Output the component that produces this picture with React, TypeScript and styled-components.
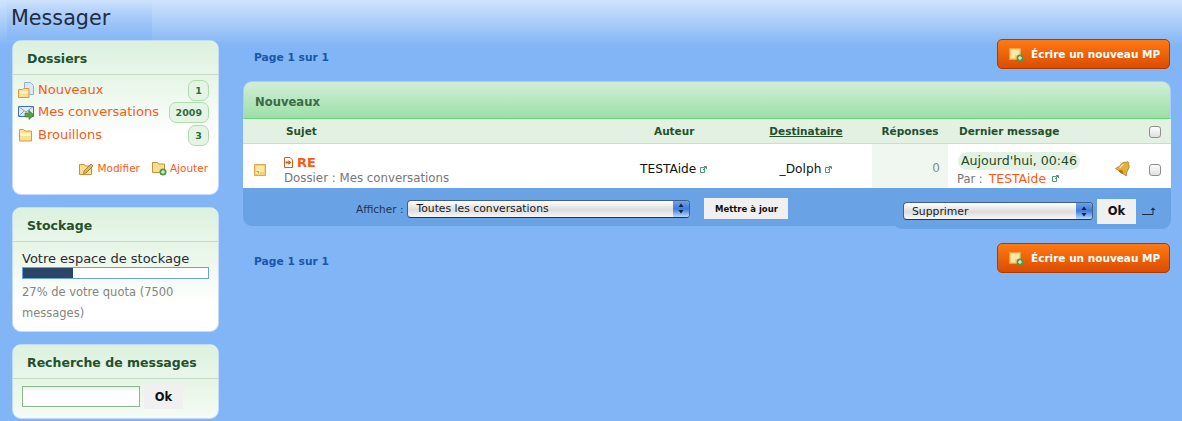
import { ReactElement } from 'react';
import styled, { createGlobalStyle } from 'styled-components';

const GlobalStyle = createGlobalStyle`
  html, body {
    margin: 0;
    padding: 0;
    height: 100%;
  }

  body {
    background: #82b5f5;
    font-family: "DejaVu Sans", Verdana, sans-serif;
  }
`;

const Page = styled.div`
  height: 421px;
  overflow: hidden;
  box-sizing: border-box;
  background: linear-gradient(#d0e3fd 0, #82b5f5 46px);
`;

const Title = styled.h1`
  width: 145px;
  height: 40px;
  box-sizing: border-box;
  margin: 0 0 0 7px;
  padding: 4px 0 0 4px;
  font-size: 20.700px;
  line-height: 28px;
  font-weight: 400;
  color: #1d2c45;
  background: linear-gradient(rgba(130, 181, 245, 0) 0, rgba(130, 181, 245, 0.55) 100%);
`;

const Columns = styled.div`
  display: flex;
  align-items: flex-start;
  padding: 0 11px 0 12px;
  gap: 24px;
`;

const Sidebar = styled.aside`
  display: flex;
  flex-direction: column;
  gap: 12px;
  width: 207px;
  flex-shrink: 0;
`;

const Panel = styled.section<{ $height: number }>`
  height: ${(p) => p.$height}px;
  box-sizing: border-box;
  border-radius: 9px;
  overflow: hidden;
  border: 1px solid #c4dcf8;
  background: linear-gradient(#ffffff 0, #e6f5e6 36px, #ffffff 96px);
`;

const PanelTitle = styled.h2`
  height: 34px;
  box-sizing: border-box;
  margin: 0;
  padding-left: 14px;
  font-size: 12.500px;
  line-height: 35px;
  font-weight: 700;
  color: #24502c;
  background: linear-gradient(#dcf1de, #e8f6ea);
  border-bottom: 1px solid #c5dcc8;
`;

const FolderList = styled.ul`
  list-style: none;
  margin: 4px 0 0;
  padding: 0 9px 0 5px;
`;

const FolderRow = styled.li`
  display: flex;
  align-items: center;
  height: 22.500px;
`;

const FolderIcon = styled.span`
  display: flex;
  justify-content: flex-start;
  width: 20px;
  flex-shrink: 0;
`;

const FolderLink = styled.a`
  flex: 1;
  margin-top: -2px;
  font-size: 13px;
  color: #fb5a14;
`;

const Count = styled.span`
  min-width: 21px;
  height: 21px;
  box-sizing: border-box;
  padding: 0 6px;
  border: 1px solid #aedcae;
  border-radius: 7px;
  background: #e6f4e6;
  color: #2f6b3b;
  font-size: 9.500px;
  font-weight: 700;
  line-height: 20px;
  text-align: center;
`;

const FolderActions = styled.div`
  display: flex;
  justify-content: flex-end;
  gap: 12px;
  margin-top: 14px;
  padding-right: 10px;
`;

const FolderAction = styled.a`
  display: flex;
  align-items: center;
  gap: 3px;
  font-size: 10.500px;
  color: #fb5a14;
`;

const PanelBody = styled.div`
  padding: 8px 9px 0;
`;

const StorageLabel = styled.div`
  font-size: 13px;
  line-height: 17px;
  color: #2a2a33;
`;

const Meter = styled.div`
  height: 12px;
  box-sizing: border-box;
  border: 1px solid #6a9fe3;
  background: #fff;
`;

const MeterFill = styled.div`
  height: 100%;
  background: #2a4568;
`;

const Quota = styled.p`
  margin: 3px 0 0;
  font-size: 11.500px;
  line-height: 21px;
  color: #85857f;
`;

const SearchRow = styled.div`
  display: flex;
  align-items: center;
  gap: 4px;
  padding: 5px 0 0 9px;
`;

const SearchInput = styled.input`
  width: 118px;
  height: 21px;
  box-sizing: border-box;
  border: 1px solid #8cb98c;
  background: linear-gradient(#ececec, #ffffff 5px);
  padding: 0;
`;

const FlatButton = styled.button<{ $width: number; $height: number; $size: number; $left?: number }>`
  width: ${(p) => p.$width}px;
  height: ${(p) => p.$height}px;
  margin-left: ${(p) => p.$left ?? 0}px;
  border: 0;
  padding: 0;
  background: #f0f0f0;
  color: #111;
  font-family: inherit;
  font-size: ${(p) => p.$size}px;
  font-weight: 700;
`;

const Main = styled.main`
  flex: 1;
  min-width: 0;
`;

const PageBar = styled.div<{ $gap: number }>`
  display: flex;
  align-items: center;
  justify-content: space-between;
  height: 30px;
  margin-top: ${(p) => p.$gap}px;
  padding: 0 1px 0 11px;
`;

const PageInfo = styled.span`
  padding-top: 6px;
  font-size: 10.700px;
  font-weight: 700;
  color: #1a56a8;
`;

const WriteButton = styled.a`
  display: flex;
  align-items: center;
  gap: 7px;
  width: 173px;
  height: 30px;
  box-sizing: border-box;
  padding-left: 11px;
  border: 1px solid #a83c05;
  border-radius: 5px;
  background: linear-gradient(#ff7a12, #dc4c02);
  color: #fff;
  font-size: 10.500px;
  font-weight: 700;
`;

const Board = styled.section`
  margin-top: 12px;
`;

const BoardTitle = styled.h2`
  height: 38px;
  box-sizing: border-box;
  margin: 0;
  padding-left: 11px;
  border: 1px solid #a9cdf3;
  border-bottom: 1px solid #62d67c;
  border-radius: 9px 9px 0 0;
  background: linear-gradient(#d3eed7, #9cdfa8);
  color: #3c6a42;
  font-size: 11.600px;
  line-height: 41px;
  font-weight: 700;
`;

const grid = '40px 356px 101px 132px 76px 157px 37px 29px';

const HeadRow = styled.div`
  display: grid;
  grid-template-columns: ${grid};
  align-items: center;
  height: 25px;
  box-sizing: border-box;
  background: #e3f1e3;
  border-bottom: 1px solid #d3d8d3;
  color: #24502c;
  font-size: 10.500px;
  font-weight: 700;
`;

const HeadCell = styled.span<{ $align?: string; $pad?: string; $underline?: boolean }>`
  text-align: ${(p) => p.$align ?? 'left'};
  padding: ${(p) => p.$pad ?? '0'};
  text-decoration: ${(p) => (p.$underline ? 'underline' : 'none')};
`;

const DataRow = styled.div`
  display: grid;
  grid-template-columns: ${grid};
  grid-template-rows: 44px;
  height: 44px;
  align-items: stretch;
  background: #fff;
`;

const Cell = styled.div<{ $justify?: string; $tint?: boolean; $top?: number; $left?: number }>`
  display: flex;
  align-items: center;
  justify-content: ${(p) => p.$justify ?? 'flex-start'};
  box-sizing: border-box;
  padding-top: ${(p) => p.$top ?? 0}px;
  padding-left: ${(p) => p.$left ?? 0}px;
  background: ${(p) => (p.$tint ? '#f0f7f0' : 'transparent')};
`;

const SubjectCell = styled.div`
  padding: 10px 0 0 1px;
`;

const SubjectLine = styled.div`
  display: flex;
  align-items: center;
  gap: 4px;
  height: 17px;
  color: #fb5a14;
  font-size: 13px;
  font-weight: 700;
`;

const SubjectFolder = styled.div`
  font-size: 11.800px;
  line-height: 15px;
  color: #767676;
  white-space: nowrap;
`;

const UserName = styled.span`
  display: inline-flex;
  align-items: center;
  gap: 4px;
  font-size: 12.200px;
  color: #111;
`;

const Replies = styled.span`
  width: 100%;
  padding-right: 8px;
  text-align: right;
  font-size: 12px;
  color: #8a8a8a;
`;

const LastCell = styled.div`
  padding: 8px 0 0 9px;
`;

const DatePill = styled.span`
  display: block;
  width: fit-content;
  height: 18px;
  margin-left: 1px;
  padding: 0 3px;
  border-radius: 9px;
  background: #e3f1e3;
  color: #1f4a27;
  font-size: 12.600px;
  line-height: 18px;
  white-space: nowrap;
`;

const ByLine = styled.div`
  display: flex;
  align-items: center;
  gap: 6px;
  height: 17px;
  font-size: 11.500px;
  color: #767676;
`;

const ByName = styled.span`
  font-size: 12.400px;
  color: #fb5a14;
`;

const Check = styled.span`
  display: block;
  width: 10px;
  height: 10px;
  margin-right: 3px;
  border: 1px solid #8f8f8f;
  border-radius: 3px;
  background: linear-gradient(#fdfdfd, #dfdfdf);
`;

const Footer = styled.div`
  display: flex;
  justify-content: space-between;
  align-items: flex-start;
  height: 38px;
  margin-bottom: 3px;
  border-radius: 0 0 9px 9px;
  background: #6aa2e6;
`;

const FilterForm = styled.div`
  display: flex;
  align-items: center;
  gap: 4px;
  padding: 10px 0 0 113px;
  font-size: 10.500px;
  color: #24344e;
`;

const ActionForm = styled.div`
  display: flex;
  align-items: center;
  width: 278px;
  height: 41px;
  box-sizing: border-box;
  padding: 5px 0 0 10px;
  border-radius: 0 9px 9px 9px;
  background: #6aa2e6;
`;

const FakeSelect = styled.div<{ $width: number }>`
  display: flex;
  align-items: center;
  justify-content: space-between;
  width: ${(p) => p.$width}px;
  height: 18px;
  box-sizing: border-box;
  padding-left: 8px;
  border: 1px solid #3f5f8c;
  border-bottom-color: #24344e;
  border-radius: 4px;
  background: linear-gradient(#ffffff, #dcdcdc 55%, #f7f7f7);
  color: #1a1a1a;
  font-size: 10.800px;
  overflow: hidden;
`;

const SelectArrows = styled.span`
  display: flex;
  align-items: center;
  justify-content: center;
  width: 16px;
  height: 100%;
  background: linear-gradient(#6f9fe6, #3f7bdc 50%, #b5dcfa);
`;

const ReturnMark = styled.span`
  display: flex;
  margin-left: 6px;
`;

const NoteMark = styled.span`
  display: flex;
  padding: 8px 0 0 11px;
`;

function FolderGlyph(): ReactElement {
  return (
    <svg width="15" height="14" viewBox="0 0 15 14">
      <path d="M1.500 1.500h4l1.500 1.500h6.500v10h-12z" fill="#fbe08e" stroke="#d99a3c" />
      <path d="M2.500 5h10v3h-10z" fill="#fff6d0" />
    </svg>
  );
}

function NewFolderGlyph(): ReactElement {
  return (
    <svg width="16" height="16" viewBox="0 0 16 16">
      <path d="M6.500.500h6l3 3v9h-9z" fill="#dbe8fb" stroke="#8fb0dc" />
      <path d="M.500 7.500h4l1-1h5.500v9H.500z" fill="#fbdf8c" stroke="#d99a3c" />
      <path d="M1.500 9.500h8.500v2H1.500z" fill="#fff6d0" />
    </svg>
  );
}

function MailGlyph(): ReactElement {
  return (
    <svg width="16" height="15" viewBox="0 0 16 15">
      <path d="M.500 1.500h15v10H.500z" fill="#e4edfa" stroke="#3f6fb0" />
      <path d="M.500 1.500 8 7l7.500-5.500M.500 11.500 6 6M15.500 11.500 10 6" fill="none" stroke="#7f9fcf" />
      <path d="M7 8h4V5.500l5 4.500-5 4.500V12H7z" fill="#5aa23c" stroke="#2f7420" strokeWidth=".6" />
    </svg>
  );
}

function EditFolderGlyph(): ReactElement {
  return (
    <svg width="15" height="14" viewBox="0 0 15 14">
      <path d="M.500 3.500h5l1 1.500h6v8.500H.500z" fill="#fbdf8c" stroke="#c98f3a" />
      <path d="M5 10l-.500 2.500L7 12l7-7-2-2z" fill="#e8b54c" stroke="#9a7030" strokeWidth=".8" />
    </svg>
  );
}

function AddFolderGlyph(): ReactElement {
  return (
    <svg width="15" height="15" viewBox="0 0 15 15">
      <path d="M.500 1.500h5l1 1.500h6v8.500H.500z" fill="#fbdf8c" stroke="#c98f3a" />
      <circle cx="11" cy="11" r="3.500" fill="#4f9a48" />
      <path d="M9 11h4M11 9v4" stroke="#fff" />
    </svg>
  );
}

function NoteGlyph(): ReactElement {
  return (
    <svg width="12" height="12" viewBox="0 0 12 12">
      <path d="M.500.500h11v11H.500z" fill="#f6cf73" stroke="#e3a545" />
      <path d="M2 2h8v6H6v2H2z" fill="#fbe7a8" />
      <path d="M2.500 7.500h2v2" fill="none" stroke="#d69a3e" />
    </svg>
  );
}

function NoteAddGlyph(): ReactElement {
  return (
    <svg width="15" height="15" viewBox="0 0 15 15">
      <path d="M.500 1.500h11v11H.500z" fill="#f6cf73" stroke="#e3a545" />
      <path d="M2 3h8v5H6v3H2z" fill="#fbe7a8" />
      <circle cx="11" cy="11" r="3.500" fill="#4f9a48" />
      <path d="M9 11h4M11 9v4" stroke="#fff" />
    </svg>
  );
}

function SubjectGlyph(): ReactElement {
  return (
    <svg width="9" height="11" viewBox="0 0 9 11">
      <path d="M.500.500h5.500l2.500 2.500v7.500H.500z" fill="#fff" stroke="#c9621c" />
      <path d="M1.500 4.500h3V3l3 2.500-3 2.500V6.500h-3z" fill="#c9621c" />
    </svg>
  );
}

function ProfileGlyph(): ReactElement {
  return (
    <svg width="7" height="7" viewBox="0 0 7 7">
      <path d="M.500 1.500h4v5h-4z" fill="#fff" stroke="#4a9a78" />
      <path d="M3 4l3-3M4 .500h2.500V3" fill="none" stroke="#4a9a78" />
    </svg>
  );
}

function BellGlyph(): ReactElement {
  return (
    <svg width="17" height="17" viewBox="0 0 17 17">
      <g transform="rotate(35 8.500 8.500)">
        <path
          d="M8.500 .500c1 0 1.500.8 1.500 1.500 2.500 1 3 3.500 3 6 0 2 1.500 3.500 2 5H2c.500-1.500 2-3 2-5 0-2.500.500-5 3-6 0-.700.500-1.500 1.500-1.500z"
          fill="#e5b03a"
          stroke="#a8761c"
          strokeWidth=".7"
        />
        <path d="M6 5c-.800 1.500-.500 3.500-1 5" fill="none" stroke="#fbe9a6" strokeWidth="1.200" />
        <ellipse cx="8.500" cy="12.500" rx="2.500" ry="1.500" fill="#a8761c" />
      </g>
    </svg>
  );
}

function ReturnGlyph(): ReactElement {
  return (
    <svg width="14" height="8" viewBox="0 0 14 8">
      <path d="M0 7.500h11V2" fill="none" stroke="#1c2c44" />
      <path d="M8.500 3 11 .500 13.500 3z" fill="#1c2c44" />
    </svg>
  );
}

function ArrowsGlyph(): ReactElement {
  return (
    <svg width="6" height="11" viewBox="0 0 6 11">
      <path d="M3 .500 5.500 4H.500zM3 10.500.500 7h5z" fill="#10203c" />
    </svg>
  );
}

export default function App(): ReactElement {
  const usedPercent = 27;

  return (
    <Page>
      <GlobalStyle />
      <Title>Messager</Title>
      <Columns>
        <Sidebar>
          <Panel $height={155}>
            <PanelTitle>Dossiers</PanelTitle>
            <FolderList>
              <FolderRow>
                <FolderIcon><NewFolderGlyph /></FolderIcon>
                <FolderLink>Nouveaux</FolderLink>
                <Count>1</Count>
              </FolderRow>
              <FolderRow>
                <FolderIcon><MailGlyph /></FolderIcon>
                <FolderLink>Mes conversations</FolderLink>
                <Count>2009</Count>
              </FolderRow>
              <FolderRow>
                <FolderIcon><FolderGlyph /></FolderIcon>
                <FolderLink>Brouillons</FolderLink>
                <Count>3</Count>
              </FolderRow>
            </FolderList>
            <FolderActions>
              <FolderAction><EditFolderGlyph />Modifier</FolderAction>
              <FolderAction><AddFolderGlyph />Ajouter</FolderAction>
            </FolderActions>
          </Panel>
          <Panel $height={125}>
            <PanelTitle>Stockage</PanelTitle>
            <PanelBody>
              <StorageLabel>Votre espace de stockage</StorageLabel>
              <Meter>
                <MeterFill style={{ width: `${usedPercent}%` }} />
              </Meter>
              <Quota>27% de votre quota (7500 messages)</Quota>
            </PanelBody>
          </Panel>
          <Panel $height={75}>
            <PanelTitle>Recherche de messages</PanelTitle>
            <SearchRow>
              <SearchInput />
              <FlatButton $width={39} $height={25} $size={11.5}>Ok</FlatButton>
            </SearchRow>
          </Panel>
        </Sidebar>
        <Main>
          <PageBar $gap={-1}>
            <PageInfo>Page 1 sur 1</PageInfo>
            <WriteButton><NoteAddGlyph />Écrire un nouveau MP</WriteButton>
          </PageBar>
          <Board>
            <BoardTitle>Nouveaux</BoardTitle>
            <HeadRow>
              <span />
              <HeadCell $pad="0 0 0 3px">Sujet</HeadCell>
              <HeadCell $pad="0 0 0 15px">Auteur</HeadCell>
              <HeadCell $align="center" $underline>Destinataire</HeadCell>
              <HeadCell $align="center">Réponses</HeadCell>
              <HeadCell $pad="0 0 0 11px">Dernier message</HeadCell>
              <span />
              <Cell $justify="center" $top={1}><Check /></Cell>
            </HeadRow>
            <DataRow>
              <Cell><NoteMark><NoteGlyph /></NoteMark></Cell>
              <SubjectCell>
                <SubjectLine><SubjectGlyph />RE</SubjectLine>
                <SubjectFolder>Dossier : Mes conversations</SubjectFolder>
              </SubjectCell>
              <Cell $top={6} $left={1}><UserName>TESTAide<ProfileGlyph /></UserName></Cell>
              <Cell $justify="center" $top={6}><UserName>_Dolph<ProfileGlyph /></UserName></Cell>
              <Cell $tint $top={4}><Replies>0</Replies></Cell>
              <LastCell>
                <DatePill>Aujourd'hui, 00:46</DatePill>
                <ByLine>Par : <ByName>TESTAide</ByName><ProfileGlyph /></ByLine>
              </LastCell>
              <Cell $justify="center" $top={4}><BellGlyph /></Cell>
              <Cell $justify="center" $top={8}><Check /></Cell>
            </DataRow>
            <Footer>
              <FilterForm>
                Afficher :
                <FakeSelect $width={283}>Toutes les conversations<SelectArrows><ArrowsGlyph /></SelectArrows></FakeSelect>
                <FlatButton $width={84} $height={21} $size={8.5} $left={10}>Mettre à jour</FlatButton>
              </FilterForm>
              <ActionForm>
                <FakeSelect $width={190}>Supprimer<SelectArrows><ArrowsGlyph /></SelectArrows></FakeSelect>
                <FlatButton $width={39} $height={25} $size={11.5} $left={4}>Ok</FlatButton>
                <ReturnMark><ReturnGlyph /></ReturnMark>
              </ActionForm>
            </Footer>
          </Board>
          <PageBar $gap={17}>
            <PageInfo>Page 1 sur 1</PageInfo>
            <WriteButton><NoteAddGlyph />Écrire un nouveau MP</WriteButton>
          </PageBar>
        </Main>
      </Columns>
    </Page>
  );
}
